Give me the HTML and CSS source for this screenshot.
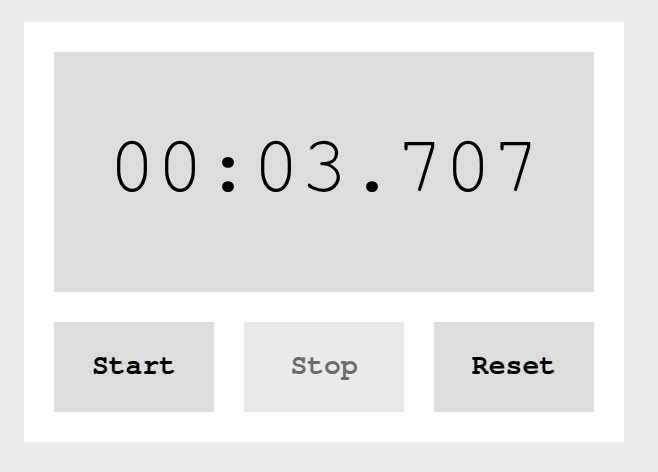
FILE: index.html
```html
<!DOCTYPE html>
<html>
<head>
<meta charset="utf-8">
<link rel="stylesheet" href="styles.css">
</head>
<body>
<div class="card">
  <div class="display">00:03.707</div>
  <div class="controls">
    <button class="btn">Start</button>
    <button class="btn" disabled>Stop</button>
    <button class="btn">Reset</button>
  </div>
</div>
</body>
</html>
```
FILE: styles.css
```css
html, body {
  margin: 0;
  padding: 0;
  background: #ececec;
}
body {
  padding: 22px 24px;
}
.card {
  width: 540px;
  padding: 30px;
  background: #fff;
  display: flex;
  flex-direction: column;
  gap: 30px;
}
.display {
  height: 240px;
  box-sizing: border-box;
  padding-bottom: 10px;
  background: #dddddd;
  display: flex;
  align-items: center;
  justify-content: center;
  font-family: "FreeMono", monospace;
  font-size: 80px;
  color: #000;
}
.controls {
  display: grid;
  grid-template-columns: repeat(3, 160px);
  gap: 30px;
}
.btn {
  height: 90px;
  border: none;
  background: #dddddd;
  font-family: "FreeMono", monospace;
  font-weight: bold;
  font-size: 28px;
  color: #000;
  padding: 0 0 2px;
}
.btn:disabled {
  background: #eaeaea;
  color: #6d6d6d;
}
```
